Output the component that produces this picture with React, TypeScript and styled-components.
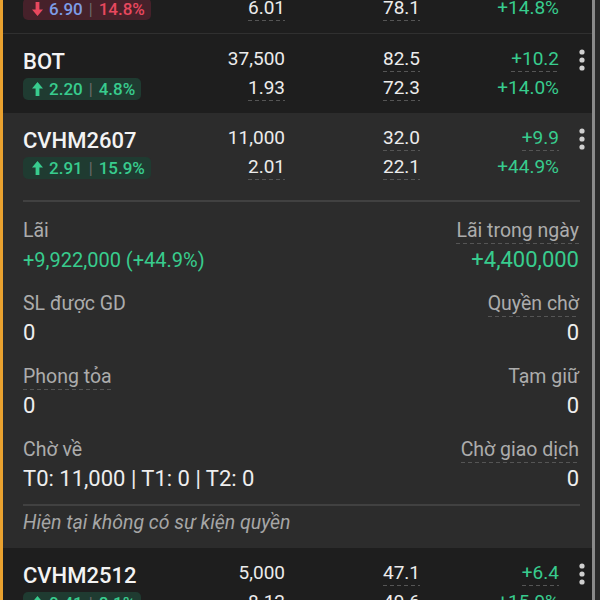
import React from 'react';
import styled, { createGlobalStyle, css } from 'styled-components';

const GREEN = '#38cc8e';
const RED = '#e8485e';
const BLUE = '#7d9ce6';

const GlobalStyle = createGlobalStyle`
  html, body { margin: 0; padding: 0; background: #1e1e1e; }
  body {
    font-family: Roboto, "Noto Sans", "Liberation Sans", sans-serif;
    color: #eeeeee;
    width: 600px;
    height: 600px;
    overflow: hidden;
  }
`;

const Screen = styled.div`
  display: flex;
  width: 600px;
  height: 600px;
  overflow: hidden;
  background: #1e1e1e;
`;

const List = styled.div`
  flex: 1;
  align-self: flex-start;
  display: flex;
  flex-direction: column;
  margin-top: -46px;
  border-left: 3px solid #e9a12f;
`;

const Scrollbar = styled.div`
  width: 5px;
  border-left: 3px solid #8a8a8a;
  background: #2a2a2a;
`;

const Row = styled.div<{ $expanded?: boolean; $divider?: boolean }>`
  background: ${(p) => (p.$expanded ? '#2c2c2c' : '#1e1e1e')};
  border-bottom: ${(p) => (p.$divider ? '1px solid #303030' : 'none')};
`;

const Summary = styled.div`
  display: grid;
  grid-template-columns: 142px 120px 135px 139px 1fr;
  grid-template-rows: 30px 28px;
  align-items: center;
  padding: 10px 0 11px 20px;
`;

const Symbol = styled.span`
  font-size: 22px;
  font-weight: 500;
  color: #f3f3f3;
  line-height: 24px;
  padding-top: 5px;
  white-space: nowrap;
`;

const dashes = css`
  background-image: repeating-linear-gradient(to right, #555555 0 4px, transparent 4px 7px);
  background-size: 100% 1px;
  background-repeat: no-repeat;
  background-position: 0 100%;
`;

const Num = styled.span<{ $tone?: 'green' | 'plain'; $dashed?: boolean }>`
  justify-self: end;
  font-size: 19px;
  line-height: 22px;
  color: ${(p) => (p.$tone === 'green' ? GREEN : '#ececec')};
  padding-bottom: 2px;
  margin-bottom: -2px;
  ${(p) => p.$dashed && dashes}
`;

const Dots = styled.svg`
  grid-row: 1;
  grid-column: 5;
  justify-self: start;
  margin-left: 20px;
  margin-top: 2px;
`;

const Badge = styled.div<{ $down?: boolean }>`
  justify-self: start;
  display: flex;
  align-items: center;
  gap: 6px;
  height: 22px;
  padding: 0 6px 0 9px;
  border-radius: 5px;
  margin-top: 2px;
  background: ${(p) => (p.$down ? '#46212a' : '#1f3b31')};
  font-size: 17px;
  font-weight: 500;
`;

const BadgeText = styled.span<{ $color: string }>`
  color: ${(p) => p.$color};
  line-height: 22px;
`;

const BadgeSep = styled.span`
  color: #6b6b6b;
  font-weight: 400;
  font-size: 16px;
`;

const Details = styled.div`
  display: flex;
  flex-direction: column;
  padding: 0 12px 8px 20px;
`;

const Divider = styled.div<{ $top: number }>`
  height: 2px;
  background: #414141;
  margin-top: ${(p) => p.$top}px;
`;

const DetailGrid = styled.div`
  display: grid;
  grid-template-columns: 1fr 1fr;
  row-gap: 15px;
  padding: 16px 1px 0 0;
`;

const Cell = styled.div<{ $right?: boolean }>`
  display: flex;
  flex-direction: column;
  align-items: ${(p) => (p.$right ? 'flex-end' : 'flex-start')};
  height: 58px;
`;

const Label = styled.span<{ $dashed?: boolean }>`
  font-size: 19.5px;
  line-height: 26px;
  height: 26px;
  color: #acacac;
  ${(p) => p.$dashed && dashes}
`;

const Value = styled.span<{ $tone?: 'green' | 'plain'; $size: number }>`
  margin-top: 1px;
  font-size: ${(p) => p.$size}px;
  line-height: 30px;
  color: ${(p) => (p.$tone === 'green' ? GREEN : '#eeeeee')};
`;

const Note = styled.div`
  font-size: 19.5px;
  font-style: italic;
  line-height: 34px;
  color: #a6a6a6;
`;

const Arrow = ({ down, color }: { down?: boolean; color: string }) => (
  <svg width="11" height="14" viewBox="0 0 11 14" style={{ transform: down ? 'rotate(180deg)' : undefined }}>
    <path d="M5.5 0 L11 6.5 H7.4 V14 H3.6 V6.5 H0 Z" fill={color} />
  </svg>
);

const VDots = () => (
  <Dots width="6" height="22" viewBox="0 0 6 22">
    <circle cx="3" cy="3" r="2.6" fill="#d0d0d0" />
    <circle cx="3" cy="11" r="2.6" fill="#d0d0d0" />
    <circle cx="3" cy="19" r="2.6" fill="#d0d0d0" />
  </Dots>
);

type Stock = {
  symbol: string;
  down?: boolean;
  change: string;
  pct: string;
  price: string;
  ratio: string;
  a1: string;
  a2: string;
  b1: string;
  b2: string;
  dots?: boolean;
};

const StockSummary = ({ s }: { s: Stock }) => (
  <Summary>
    <Symbol>{s.symbol}</Symbol>
    <Num>{s.price}</Num>
    <Num $dashed>{s.a1}</Num>
    <Num $tone="green" $dashed>{s.b1}</Num>
    {s.dots && <VDots />}
    <Badge $down={s.down}>
      <Arrow down={s.down} color={s.down ? RED : GREEN} />
      <BadgeText $color={s.down ? BLUE : GREEN}>{s.change}</BadgeText>
      <BadgeSep>|</BadgeSep>
      <BadgeText $color={s.down ? RED : GREEN}>{s.pct}</BadgeText>
    </Badge>
    <Num $dashed>{s.ratio}</Num>
    <Num $dashed>{s.a2}</Num>
    <Num $tone="green">{s.b2}</Num>
  </Summary>
);

type Item = { label: string; value: string; dashed?: boolean; green?: boolean; size: number };

const details: [Item, Item][] = [
  [
    { label: 'Lãi', value: '+9,922,000 (+44.9%)', green: true, size: 20 },
    { label: 'Lãi trong ngày', value: '+4,400,000', green: true, dashed: true, size: 22 },
  ],
  [
    { label: 'SL được GD', value: '0', size: 22 },
    { label: 'Quyền chờ', value: '0', dashed: true, size: 22 },
  ],
  [
    { label: 'Phong tỏa', value: '0', dashed: true, size: 22 },
    { label: 'Tạm giữ', value: '0', size: 22 },
  ],
  [
    { label: 'Chờ về', value: 'T0: 11,000 | T1: 0 | T2: 0', size: 22 },
    { label: 'Chờ giao dịch', value: '0', dashed: true, size: 22 },
  ],
];

const top: Stock = {
  symbol: 'CVPB2505', down: true, change: '6.90', pct: '14.8%', price: '46,500',
  ratio: '6.01', a1: '86.4', a2: '78.1', b1: '-8.3', b2: '+14.8%', dots: true,
};
const bot: Stock = {
  symbol: 'BOT', change: '2.20', pct: '4.8%', price: '37,500', ratio: '1.93',
  a1: '82.5', a2: '72.3', b1: '+10.2', b2: '+14.0%', dots: true,
};
const cvhm2607: Stock = {
  symbol: 'CVHM2607', change: '2.91', pct: '15.9%', price: '11,000', ratio: '2.01',
  a1: '32.0', a2: '22.1', b1: '+9.9', b2: '+44.9%', dots: true,
};
const cvhm2512: Stock = {
  symbol: 'CVHM2512', change: '0.41', pct: '8.1%', price: '5,000', ratio: '8.12',
  a1: '47.1', a2: '49.6', b1: '+6.4', b2: '+15.9%', dots: true,
};

export default function App() {
  return (
    <>
      <GlobalStyle />
      <Screen>
        <List>
          <Row $divider>
            <StockSummary s={top} />
          </Row>
          <Row>
            <StockSummary s={bot} />
          </Row>
          <Row $expanded>
            <StockSummary s={cvhm2607} />
            <Details>
              <Divider $top={8} />
              <DetailGrid>
                {details.map(([l, r]) => (
                  <React.Fragment key={l.label}>
                    <Cell>
                      <Label $dashed={l.dashed}>{l.label}</Label>
                      <Value $tone={l.green ? 'green' : 'plain'} $size={l.size}>{l.value}</Value>
                    </Cell>
                    <Cell $right>
                      <Label $dashed={r.dashed}>{r.label}</Label>
                      <Value $tone={r.green ? 'green' : 'plain'} $size={r.size}>{r.value}</Value>
                    </Cell>
                  </React.Fragment>
                ))}
              </DetailGrid>
              <Divider $top={9} />
              <Note>Hiện tại không có sự kiện quyền</Note>
            </Details>
          </Row>
          <Row>
            <StockSummary s={cvhm2512} />
          </Row>
        </List>
        <Scrollbar />
      </Screen>
    </>
  );
}
